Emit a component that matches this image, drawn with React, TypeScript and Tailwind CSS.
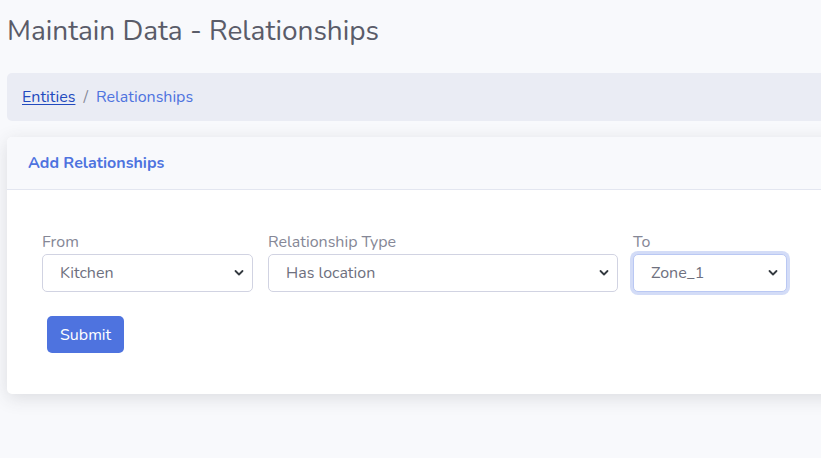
import React from 'react';

const Chevron = () => (
  <svg
    className="pointer-events-none absolute right-[9px] top-1/2 -translate-y-1/2"
    width="10"
    height="7"
    viewBox="0 0 10 7"
    fill="none"
  >
    <path d="M1.5 1.5L5 5L8.5 1.5" stroke="#343a40" strokeWidth="1.8" strokeLinecap="round" strokeLinejoin="round" />
  </svg>
);

function SelectField({
  label,
  value,
  width,
  focused,
}: {
  label: string;
  value: string;
  width: string;
  focused?: boolean;
}) {
  return (
    <div className={`flex flex-col ${width}`}>
      <label className="mb-[1px] text-[16px] leading-[22px] text-[#858796]">{label}</label>
      <div className="relative">
        <select
          defaultValue={value}
          className={
            focused
              ? 'h-[38px] w-full appearance-none rounded-[5px] border border-[#bac8f3] bg-white pl-[17px] pr-8 text-[16px] text-[#6e707e] shadow-[0_0_0_3px_rgba(78,115,223,0.25)] outline-none'
              : 'h-[38px] w-full appearance-none rounded-[5px] border border-[#d1d3e2] bg-white pl-[17px] pr-8 text-[16px] text-[#6e707e] outline-none'
          }
        >
          <option>{value}</option>
        </select>
        <Chevron />
      </div>
    </div>
  );
}

export default function App() {
  return (
    <div
      className="min-h-[458px] w-full overflow-hidden bg-[#f8f9fc] pl-[7px]"
      style={{ fontFamily: 'Nunito, Lato, "Noto Sans", sans-serif' }}
    >
      <div className="w-[860px]">
        <h1 className="pt-[14px] text-[28px] leading-[34px] font-normal text-[#5a5c69]">
          Maintain Data - Relationships
        </h1>

        <nav className="mt-[25px] flex h-[48px] items-center rounded-l-[5px] bg-[#eaecf4] pl-[15px] text-[16px]">
          <a href="#" className="text-[#224abe] underline underline-offset-2">
            Entities
          </a>
          <span className="px-[8px] text-[#858796]">/</span>
          <span className="text-[#4e73df]">Relationships</span>
        </nav>

        <div className="mt-[16px] rounded-[5px] bg-white shadow-[0_4px_18px_rgba(58,59,69,0.15)]">
          <div className="flex h-[53px] items-center rounded-t-[5px] border-b border-[#e3e6f0] bg-[#f8f9fc] pl-[21px]">
            <h6 className="text-[16px] font-bold text-[#4e73df]">Add Relationships</h6>
          </div>
          <div className="px-[35px] pt-[41px] pb-[41px]">
            <div className="flex gap-[15px]">
              <SelectField label="From" value="Kitchen" width="w-[211px]" />
              <SelectField label="Relationship Type" value="Has location" width="w-[350px]" />
              <SelectField label="To" value="Zone_1" width="w-[154px]" focused />
            </div>
            <button className="mt-[24px] ml-[5px] h-[37px] rounded-[5px] bg-[#4e73df] px-[13px] text-[16px] text-white">
              Submit
            </button>
          </div>
        </div>
      </div>
    </div>
  );
}
